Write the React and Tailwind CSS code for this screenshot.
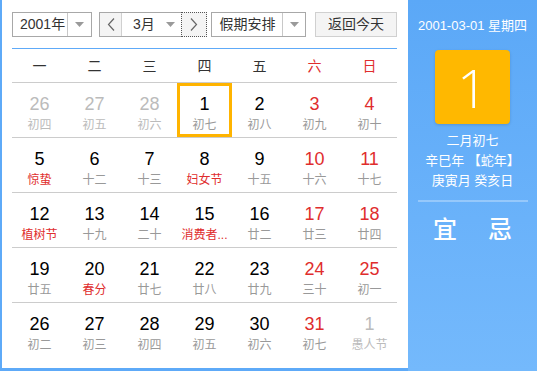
import React from "react";

const F = { fontFamily: '"Liberation Sans", "Noto Sans CJK SC", sans-serif' };

const weeks = [
  [
    { d: 26, l: "初四", o: true },
    { d: 27, l: "初五", o: true },
    { d: 28, l: "初六", o: true },
    { d: 1, l: "初七", today: true },
    { d: 2, l: "初八" },
    { d: 3, l: "初九", w: true },
    { d: 4, l: "初十", w: true },
  ],
  [
    { d: 5, l: "惊蛰", f: true },
    { d: 6, l: "十二" },
    { d: 7, l: "十三" },
    { d: 8, l: "妇女节", f: true },
    { d: 9, l: "十五" },
    { d: 10, l: "十六", w: true },
    { d: 11, l: "十七", w: true },
  ],
  [
    { d: 12, l: "植树节", f: true },
    { d: 13, l: "十九" },
    { d: 14, l: "二十" },
    { d: 15, l: "消费者...", f: true },
    { d: 16, l: "廿二" },
    { d: 17, l: "廿三", w: true },
    { d: 18, l: "廿四", w: true },
  ],
  [
    { d: 19, l: "廿五" },
    { d: 20, l: "春分", f: true },
    { d: 21, l: "廿七" },
    { d: 22, l: "廿八" },
    { d: 23, l: "廿九" },
    { d: 24, l: "三十", w: true },
    { d: 25, l: "初一", w: true },
  ],
  [
    { d: 26, l: "初二" },
    { d: 27, l: "初三" },
    { d: 28, l: "初四" },
    { d: 29, l: "初五" },
    { d: 30, l: "初六" },
    { d: 31, l: "初七", w: true },
    { d: 1, l: "愚人节", o: true },
  ],
];

const heads = ["一", "二", "三", "四", "五", "六", "日"];

function Tri() {
  return (
    <svg width="9" height="5" viewBox="0 0 9 5">
      <polygon points="0,0 9,0 4.5,5" fill="#9a9a9a" />
    </svg>
  );
}

function Chev({ dir }) {
  return (
    <svg width="8" height="13" viewBox="0 0 8 13">
      <polyline
        points={dir === "l" ? "7,0.5 1.5,6.5 7,12.5" : "1,0.5 6.5,6.5 1,12.5"}
        fill="none"
        stroke="#666"
        strokeWidth="1.2"
      />
    </svg>
  );
}

export default function App() {
  return (
    <div className="w-[537px] h-[371px] bg-[#5eaaf8] pl-[2px] pb-[3px] flex" style={F}>
      <div className="w-[406px] h-[368px] bg-white pl-[10px] pr-[11px] pt-[12px] flex flex-col">
        {/* controls */}
        <div className="flex h-[25px] text-[14px] text-[#333]">
          <div className="w-[80px] h-[25px] border border-[#a8a8a8] flex">
            <div className="w-[54px] flex items-center pl-[7px]">2001年</div>
            <div className="flex-1 border-l border-[#c8c8c8] flex items-center justify-center">
              <Tri />
            </div>
          </div>
          <div className="ml-[7px] h-[25px] border border-[#a8a8a8] flex">
            <div className="w-[22px] bg-[#f4f4f4] border-r border-[#d0d0d0] flex items-center justify-center">
              <Chev dir="l" />
            </div>
            <div className="w-[59px] flex items-center pl-[11px] pr-[6px] justify-between">
              <span>3月</span>
              <Tri />
            </div>
            <div className="w-[26px] -my-[1px] -mr-[1px] border border-dotted border-[#555] bg-[#f4f4f4] flex items-center justify-center">
              <Chev dir="r" />
            </div>
          </div>
          <div className="ml-[4px] w-[95px] h-[25px] border border-[#a8a8a8] flex">
            <div className="w-[70px] flex items-center justify-center pl-[1px]">假期安排</div>
            <div className="flex-1 border-l border-[#c8c8c8] flex items-center justify-center">
              <Tri />
            </div>
          </div>
          <div className="ml-[9px] w-[82px] h-[25px] border border-[#d0d0d0] bg-[#f4f4f4] flex items-center justify-center">
            返回今天
          </div>
        </div>

        {/* header */}
        <div className="mt-[11px] border-t border-[#5eaaf8] border-b border-b-[#cccccc] h-[35px] grid grid-cols-7 text-[14px]">
          {heads.map((h, i) => (
            <div
              key={h}
              className={
                "flex items-center justify-center pt-[2px] " +
                (i >= 5 ? "text-[#e02d2d]" : "text-[#333]")
              }
            >
              {h}
            </div>
          ))}
        </div>

        {/* weeks */}
        {weeks.map((wk, r) => (
          <div
            key={r}
            className={"grid grid-cols-7 h-[55px] " + (r < 4 ? "border-b border-[#cccccc]" : "")}
          >
            {wk.map((c, i) => {
              const numColor = c.o
                ? "text-[#bbbbbb]"
                : c.w
                ? "text-[#e02d2d]"
                : "text-black";
              const lunColor = c.o
                ? "text-[#bbbbbb]"
                : c.f
                ? "text-[#e02d2d]"
                : "text-[#999999]";
              return (
                <div
                  key={i}
                  className={
                    "flex flex-col items-center h-[54px] " +
                    (c.today ? "border-[3px] border-[#ffb400] pt-[8px]" : "pt-[11px]")
                  }
                >
                  <div className={"text-[18px] leading-[20px] " + numColor}>{c.d}</div>
                  <div className={"text-[12px] leading-[16px] mt-[3px] whitespace-nowrap " + lunColor}>
                    {c.l}
                  </div>
                </div>
              );
            })}
          </div>
        ))}
      </div>

      {/* right panel */}
      <div className="flex-1 h-[371px] -mb-[3px] bg-gradient-to-b from-[#5ba8f7] to-[#74b9fc] flex flex-col items-center text-white">
        <div className="mt-[17px] text-[13px] leading-[18px]">2001-03-01 星期四</div>
        <div
          className="mt-[15px] w-[75px] h-[74px] rounded-[4px] bg-[#ffb800] flex items-center justify-center text-[54px] font-light shadow-[0_1px_3px_rgba(0,0,0,0.15)]"
          style={{ fontFamily: '"Open Sans", "Liberation Sans", sans-serif' }}
        >
          1
        </div>
        <div className="mt-[7px] text-[13px] leading-[20px] text-center">
          <div>二月初七</div>
          <div>辛巳年 【蛇年】</div>
          <div>庚寅月 癸亥日</div>
        </div>
        <div className="mt-[9px] w-[110px] h-[2px] bg-white/30" />
        <div className="mt-[14px] flex gap-[31px] text-[24px] leading-[28px] font-medium">
          <span>宜</span>
          <span>忌</span>
        </div>
      </div>
    </div>
  );
}
